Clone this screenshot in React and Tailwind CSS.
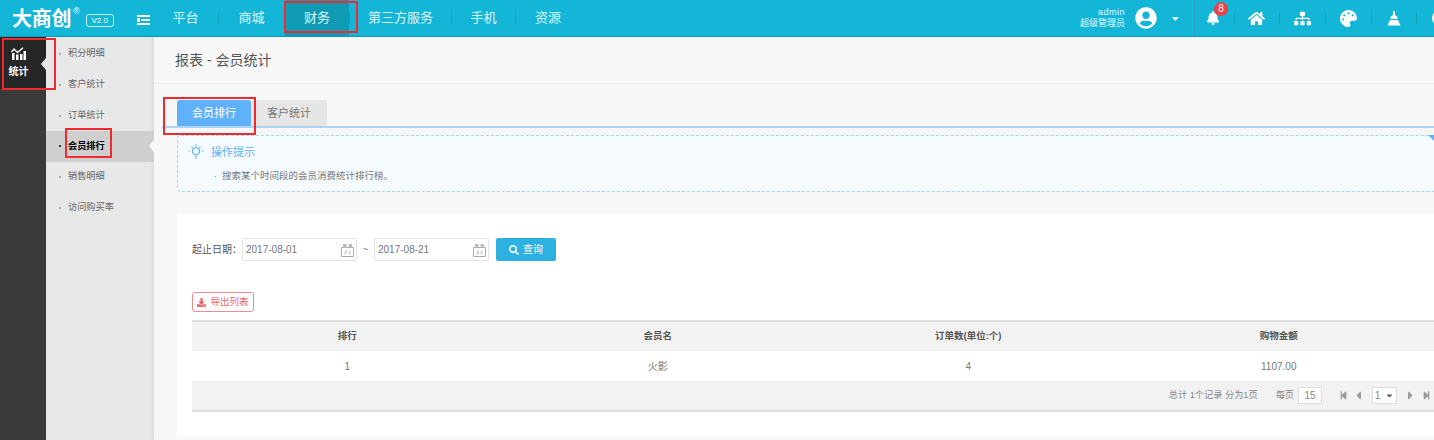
import React from 'react'
import { FaBell, FaHome, FaSitemap, FaPalette, FaUserCircle, FaSearch, FaDownload, FaCaretDown, FaStepBackward, FaStepForward, FaCaretLeft, FaCaretRight } from 'react-icons/fa'

const navItems = [
    { name: '平台', width: 'w-[65px]' },
    { name: '商城', width: 'w-[65px]' },
    { name: '财务', width: 'w-[64px] bg-[#0f9bb3]' },
    { name: '第三方服务', width: 'w-[101px]' },
    { name: '手机', width: 'w-[63px]' },
    { name: '资源', width: 'w-[64px]' },
]
const subItems = ['积分明细', '客户统计', '订单统计', '会员排行', '销售明细', '访问购买率']

const RedBox = ({ className }) => (
    <div className={`absolute border-2 border-[#ee2a2e] pointer-events-none ${className}`}></div>
)

const CalendarIcon = () => (
    <svg width="13" height="14" viewBox="0 0 13 14" fill="none" stroke="#aaa" strokeWidth="1">
        <path d="M0.5 4.500h12v9h-12z" />
        <path d="M2 1h3.500v3.500H2zM7.500 1H11v3.500H7.500z" fill="#bbb" stroke="none" />
        <path d="M4 8h1.500v1.500H4V11h1.500M7.500 8H9v3H7.500" strokeWidth="0.7" />
    </svg>
)

const StatIcon = () => (
    <svg width="15" height="13" viewBox="0 0 15 13" fill="#fff">
        <path d="M1 6h2.500v7H1zM5 7.500h2.500V13H5zM9 7h2.500v6H9zM12.500 4H15v9h-2.500z" />
        <path d="M0.500 5 3 2l3.500 3.500L12 0.800" fill="none" stroke="#fff" strokeWidth="1.300" />
    </svg>
)

const BroomIcon = () => (
    <svg width="14" height="15" viewBox="0 0 14 15" fill="#fff">
        <path d="M6 0h2v4l2.500 2v2h-7V6L6 4z" />
        <path d="M3 9h8l2.500 5.500H0.500z" />
    </svg>
)

const BulbIcon = () => (
    <svg width="16" height="16" viewBox="0 0 16 16" fill="none" stroke="#5fb1fb" strokeWidth="1.200">
        <circle cx="8" cy="7" r="3.500" />
        <path d="M6.500 12h3M7 14h2M8 0.500v1.500M2 7H0.500M15.500 7H14M3.500 2.500l1 1M12.500 2.500l-1 1" />
    </svg>
)

const Divider = () => <span className="w-px h-[11px] bg-[#0f9fbd]"></span>

const Header = () => (
    <header className="relative h-[37px] bg-[#14b6d8] border-b border-[#0d9ab8] flex items-center text-white shrink-0">
        <div className="w-[127px] pl-[12px] flex items-center shrink-0">
            <span className="text-[20px] leading-none font-bold tracking-[-0.300px] font-['Noto_Sans_CJK_SC',sans-serif]">大商创</span>
            <span className="text-[9px] self-start mt-[-3px] ml-[2px]">®</span>
            <span className="ml-[6px] mt-[4px] w-[28px] h-[13px] border border-[#c8eef6] rounded-[3px] text-[8px] leading-[11px] text-center">V2.0</span>
        </div>
        <svg width="13" height="10" viewBox="0 0 13 10" fill="#fff" className="ml-[10px] mt-[4px] shrink-0">
            <path d="M0 0h13v2H0zM4 4h9v2H4zM0 8h13v2H0zM0 3h3v4H0z" />
        </svg>
        <nav className="flex items-center h-full ml-[3px]">
            {navItems.map((item, i) => (
                <React.Fragment key={item.name}>
                    <div className={`h-full flex items-center justify-center text-[13px] text-[#dff5fa] ${item.width}`}>
                        {item.name}
                    </div>
                    {i < 5 && <Divider />}
                </React.Fragment>
            ))}
        </nav>
        <div className="ml-auto flex items-center h-full">
            <div className="text-right text-[9px] leading-[11px] text-[#e4f7fb] mr-[10px]">
                <div className="tracking-[0.5px]">admin</div>
                <div>超级管理员</div>
            </div>
            <FaUserCircle size={22} />
            <FaCaretDown size={11} className="ml-[13px]" />
            <div className="w-px h-full bg-[#2a9fc0] ml-[13px]"></div>
            <div className="relative ml-[11px] mr-[14px]">
                <FaBell size={14} />
                <span className="absolute top-[-9px] right-[-8px] w-[14px] h-[14px] rounded-full bg-[#ee4044] text-[10px] leading-[14px] text-center">8</span>
            </div>
            <Divider />
            <FaHome size={17} className="ml-[13px] mr-[14px]" />
            <Divider />
            <FaSitemap size={17} className="mx-[14px]" />
            <Divider />
            <FaPalette size={17} className="mx-[14px]" />
            <Divider />
            <div className="mx-[15px]"><BroomIcon /></div>
            <Divider />
            <span className="w-[10px] h-[16px] ml-[15px] mr-[-8px] bg-white rounded-l-full"></span>
        </div>
        <RedBox className="left-[284px] top-[1px] w-[74px] h-[32px]" />
    </header>
)

const Sidebar = () => (
    <aside className="relative w-[46px] bg-[#3a3a3a] shrink-0">
        <div className="h-[52px] bg-[#262626] flex flex-col items-center pt-[10px] pr-[9px] text-white">
            <StatIcon />
            <span className="text-[10px] font-bold leading-[12px] mt-[6px]">统计</span>
        </div>
        <span className="absolute left-[41px] top-[21px] w-0 h-0 border-y-[6px] border-y-transparent border-r-[5px] border-r-[#e8e8e8]"></span>
    </aside>
)

const SubNav = () => (
    <div className="relative w-[108px] bg-[#e8e8e8] pt-[2px] shrink-0 shadow-[inset_-4px_0_4px_-3px_#d5d5d5]">
        {subItems.map((item, i) => (
            <div key={item} className={`relative h-[30.700px] pl-[22px] flex items-center text-[9.200px] ${i === 3 ? 'bg-[#cfcfcf] text-black font-bold' : 'text-[#666]'}`}>
                <span className={`absolute left-[13px] w-[2px] h-[2px] rounded-full ${i === 3 ? 'bg-black' : 'bg-[#999]'}`}></span>
                {item}
                {i === 3 && <span className="absolute right-0 w-0 h-0 border-y-[6px] border-y-transparent border-r-[5px] border-r-[#f7f7f7]"></span>}
            </div>
        ))}
    </div>
)

const DateInput = ({ value }) => (
    <div className="w-[115px] h-[23px] bg-white border border-[#e3e3e3] rounded-[2px] flex items-center justify-between pl-[3px] pr-[2px] text-[10px] text-[#777]">
        <span>{value}</span>
        <CalendarIcon />
    </div>
)

const Pager = () => (
    <div className="h-[31px] bg-[#f2f2f2] border-b-2 border-[#ddd] flex items-center justify-end text-[9.200px] text-[#888] pr-[3px]">
        <span>总计 1个记录 分为1页</span>
        <span className="ml-[18px]">每页</span>
        <span className="ml-[4px] w-[24px] h-[17px] bg-white border border-[#ddd] text-center leading-[15px] text-[10px]">15</span>
        <FaStepBackward size={9} className="ml-[17px] text-[#999]" />
        <FaCaretLeft size={13} className="ml-[4px] text-[#999]" />
        <span className="ml-[7px] w-[25px] h-[17px] bg-white border border-[#ddd] flex items-center justify-center gap-[5px] leading-none text-[10px]">
            1 <FaCaretDown size={9} className="text-[#555]" />
        </span>
        <FaCaretRight size={13} className="ml-[7px] text-[#999]" />
        <FaStepForward size={9} className="ml-[5px] text-[#999]" />
    </div>
)

const Table = () => (
    <div className="mt-[8px] text-[9.500px]">
        <div className="grid grid-cols-4 h-[31px] items-center text-center bg-[#f2f2f2] border-t-2 border-[#ddd] text-[#555] font-bold">
            <div>排行</div>
            <div>会员名</div>
            <div>订单数(单位:个)</div>
            <div>购物金额</div>
        </div>
        <div className="grid grid-cols-4 h-[30px] items-center text-center text-[#777] text-[10px]">
            <div>1</div>
            <div>火影</div>
            <div>4</div>
            <div>1107.00</div>
        </div>
        <Pager />
    </div>
)

export default function App() {
    return (
        <div className="relative w-[1434px] h-[440px] overflow-hidden flex flex-col bg-[#f7f7f7] font-['Liberation_Sans','Noto_Sans_CJK_SC',sans-serif]">
            <Header />
            <div className="flex flex-1 min-h-0">
                <Sidebar />
                <SubNav />
                <main className="flex-1 min-w-0">
                    <div className="h-[47px] border-b border-[#eeeeee] pl-[21px] flex items-center text-[14px] text-[#555]">
                        报表 - 会员统计
                    </div>
                    <div className="ml-[8px] pl-[15px] mt-[16px] flex items-start h-[28px] border-b-2 border-[#a9d4f5]">
                        <div className="w-[74px] h-[26px] bg-[#5fb1fb] rounded-t-[3px] flex items-center justify-center text-[11px] text-white">会员排行</div>
                        <div className="w-[76px] h-[26px] bg-[#e6e6e6] rounded-t-[3px] flex items-center justify-center text-[11px] text-[#777]">客户统计</div>
                    </div>
                    <div className="relative ml-[23px] mt-[7px] h-[57px] bg-[#f4fafe] border border-dashed border-r-0 border-[#a6d3f5] rounded-l-[4px] pl-[10px] pt-[8px]">
                        <div className="flex items-center text-[11px] text-[#5fb1fb]">
                            <BulbIcon />
                            <span className="ml-[7px]">操作提示</span>
                        </div>
                        <div className="flex mt-[8px] ml-[26px] text-[9.500px] text-[#777]">
                            <span className="w-[8px]">·</span>
                            搜索某个时间段的会员消费统计排行榜。
                        </div>
                        <span className="absolute right-0 top-[-1px] w-0 h-0 border-t-[6px] border-t-[#5fb1fb] border-l-[6px] border-l-transparent"></span>
                    </div>
                    <div className="ml-[23px] mt-[22px] bg-white pl-[15px] h-[222px] pt-[24px]">
                        <div className="flex items-center text-[10px] text-[#555]">
                            <span className="w-[50px]">起止日期：</span>
                            <DateInput value="2017-08-01" />
                            <span className="w-[17px] text-center text-[#888]">~</span>
                            <DateInput value="2017-08-21" />
                            <button className="ml-[7px] w-[60px] h-[23px] bg-[#2cb1e0] rounded-[2px] text-white flex items-center justify-center gap-[4px]">
                                <FaSearch size={10} />
                                查询
                            </button>
                        </div>
                        <button className="mt-[31px] w-[62px] h-[20px] border border-[#f08a8f] rounded-[3px] flex items-center justify-center gap-[4px] text-[9.500px] text-[#ef6468] bg-white">
                            <FaDownload size={9} />
                            导出列表
                        </button>
                        <Table />
                    </div>
                </main>
            </div>
            <RedBox className="left-[2px] top-[38px] w-[54px] h-[52px]" />
            <RedBox className="left-[163px] top-[97px] w-[93px] h-[38px]" />
            <RedBox className="left-[65px] top-[128px] w-[47px] h-[30px]" />
        </div>
    )
}
